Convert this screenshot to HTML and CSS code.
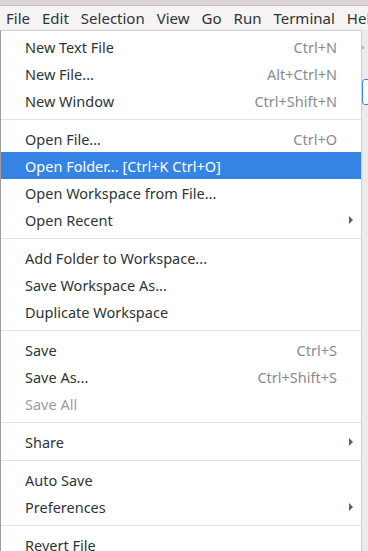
FILE: index.html
```html
<html>
<head>
	<meta charset="utf-8">
	<link rel="stylesheet" href="styles.css">
</head>

<body>
	<div class="titlestrip"></div>

	<div class="menubar">
		<span class="menubar-item">File</span>
		<span class="menubar-item">Edit</span>
		<span class="menubar-item">Selection</span>
		<span class="menubar-item">View</span>
		<span class="menubar-item">Go</span>
		<span class="menubar-item">Run</span>
		<span class="menubar-item">Terminal</span>
		<span class="menubar-item">Help</span>
	</div>

	<div class="workbench">
		<div class="behind-dot"></div>
		<div class="behind-box"></div>

		<div class="dropdown">
			<div class="item"><span class="label">New Text File</span><span class="key">Ctrl+N</span></div>
			<div class="item"><span class="label">New File...</span><span class="key">Alt+Ctrl+N</span></div>
			<div class="item"><span class="label">New Window</span><span class="key">Ctrl+Shift+N</span></div>
			<div class="sep"></div>
			<div class="item"><span class="label">Open File...</span><span class="key">Ctrl+O</span></div>
			<div class="item active"><span class="label">Open Folder... [Ctrl+K Ctrl+O]</span></div>
			<div class="item"><span class="label">Open Workspace from File...</span></div>
			<div class="item"><span class="label">Open Recent</span><span class="arrow"></span></div>
			<div class="sep"></div>
			<div class="item"><span class="label">Add Folder to Workspace...</span></div>
			<div class="item"><span class="label">Save Workspace As...</span></div>
			<div class="item"><span class="label">Duplicate Workspace</span></div>
			<div class="sep"></div>
			<div class="item"><span class="label">Save</span><span class="key">Ctrl+S</span></div>
			<div class="item"><span class="label">Save As...</span><span class="key">Ctrl+Shift+S</span></div>
			<div class="item disabled"><span class="label">Save All</span></div>
			<div class="sep"></div>
			<div class="item"><span class="label">Share</span><span class="arrow"></span></div>
			<div class="sep"></div>
			<div class="item"><span class="label">Auto Save</span></div>
			<div class="item"><span class="label">Preferences</span><span class="arrow"></span></div>
			<div class="sep"></div>
			<div class="item"><span class="label">Revert File</span></div>
		</div>
	</div>
</body>

</html>
```

FILE: styles.css
```css
body {
	margin: 0;
	padding: 0;
	font-family: 'Noto Sans', sans-serif;
	font-size: 14.5px;
	color: #2e3436;
	background: #ebebeb;
	overflow: hidden;
}

.titlestrip {
	height: 5px;
	background: #ddd5d5;
	border-bottom: 1px solid #c8c0c0;
}

.menubar {
	display: flex;
	height: 24px;
	align-items: center;
	background: #f5f3f3;
	white-space: nowrap;
	font-size: 15px;
}

.menubar-item {
	padding: 0 6px;
}

.workbench {
	position: relative;
	height: 521px;
	background: #ebebeb;
}

.behind-dot {
	position: absolute;
	left: 362px;
	top: 16px;
	width: 2px;
	height: 3px;
	background: #a8b8c8;
}

.behind-box {
	position: absolute;
	left: 362px;
	top: 49px;
	width: 10px;
	height: 24px;
	border: 1px solid #3584e4;
	border-radius: 3px;
	background: #fff;
}

.dropdown {
	position: absolute;
	left: 0;
	top: 0;
	width: 360px;
	background: #fff;
	border-left: 1px solid #a49c9c;
	border-top: 1px solid #d0d0d0;
	border-right: 1px solid #cfcfcf;
	padding-top: 2px;
}

.item {
	display: flex;
	align-items: center;
	height: 27px;
	padding: 0 24px 0 24px;
}

.label {
	flex: 1;
	white-space: nowrap;
}

.key {
	color: #8a8c8c;
}

.item.active {
	background: #3584e4;
	color: #fff;
}

.item.disabled {
	color: #9a9c9c;
}

.arrow {
	width: 0;
	height: 0;
	margin-right: -16px;
	border-top: 4px solid transparent;
	border-bottom: 4px solid transparent;
	border-left: 4px solid #5c6466;
}

.sep {
	height: 1px;
	margin: 5px 0;
	background: #e2e0e0;
}
```
